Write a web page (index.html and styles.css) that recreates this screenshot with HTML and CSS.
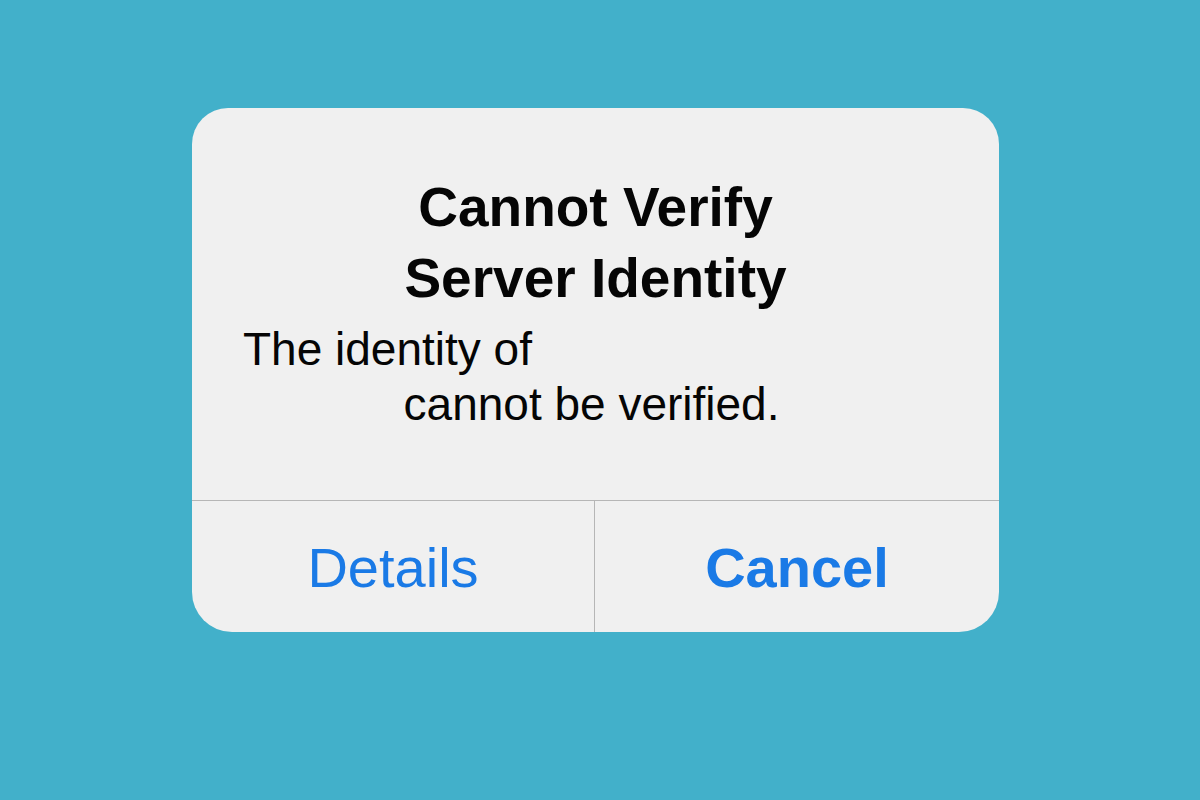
FILE: index.html
```html
<!DOCTYPE html>
<html lang="en">
<head>
<meta charset="utf-8">
<title>Cannot Verify Server Identity</title>
<link rel="stylesheet" href="styles.css">
</head>
<body>
<div class="page">
  <div class="alert">
    <div class="content">
      <h1 class="title">Cannot Verify<br>Server Identity</h1>
      <p class="message">
        <span class="line line-first">The identity of</span>
        <span class="line line-second">cannot be verified.</span>
      </p>
    </div>
    <div class="actions">
      <div class="action action-details">Details</div>
      <div class="action action-cancel">Cancel</div>
    </div>
  </div>
</div>
</body>
</html>
```

FILE: styles.css
```css
html, body {
  margin: 0;
  padding: 0;
}

body {
  width: 1200px;
  height: 800px;
  background: #42b0ca;
  font-family: "Liberation Sans", Arial, sans-serif;
  overflow: hidden;
}

.page {
  padding: 108px 0 0 192px;
}

.alert {
  width: 807px;
  height: 524px;
  background: #f0f0f0;
  border-radius: 36px 36px 40px 40px;
  display: flex;
  flex-direction: column;
  overflow: hidden;
}

.content {
  padding: 64px 0 0 0;
  height: 392px;
  box-sizing: border-box;
}

.title {
  margin: 0;
  font-size: 55px;
  line-height: 71px;
  font-weight: 700;
  color: #050505;
  text-align: center;
}

.message {
  margin: 8px 0 0 0;
  font-size: 46px;
  line-height: 55px;
  font-weight: 400;
  color: #050505;
}

.line {
  display: block;
}

.line-first {
  padding-left: 51px;
}

.line-second {
  text-align: center;
  padding-right: 8px;
}

.actions {
  flex: 1;
  display: flex;
  border-top: 1px solid #b6b6b6;
}

.action {
  flex: 1;
  display: flex;
  align-items: center;
  justify-content: center;
  font-size: 56px;
  color: #1a7ae6;
  padding-top: 2px;
}

.action-details {
  flex: 0 0 402px;
  border-right: 1px solid #b6b6b6;
  font-weight: 400;
}

.action-cancel {
  font-weight: 700;
}
```
